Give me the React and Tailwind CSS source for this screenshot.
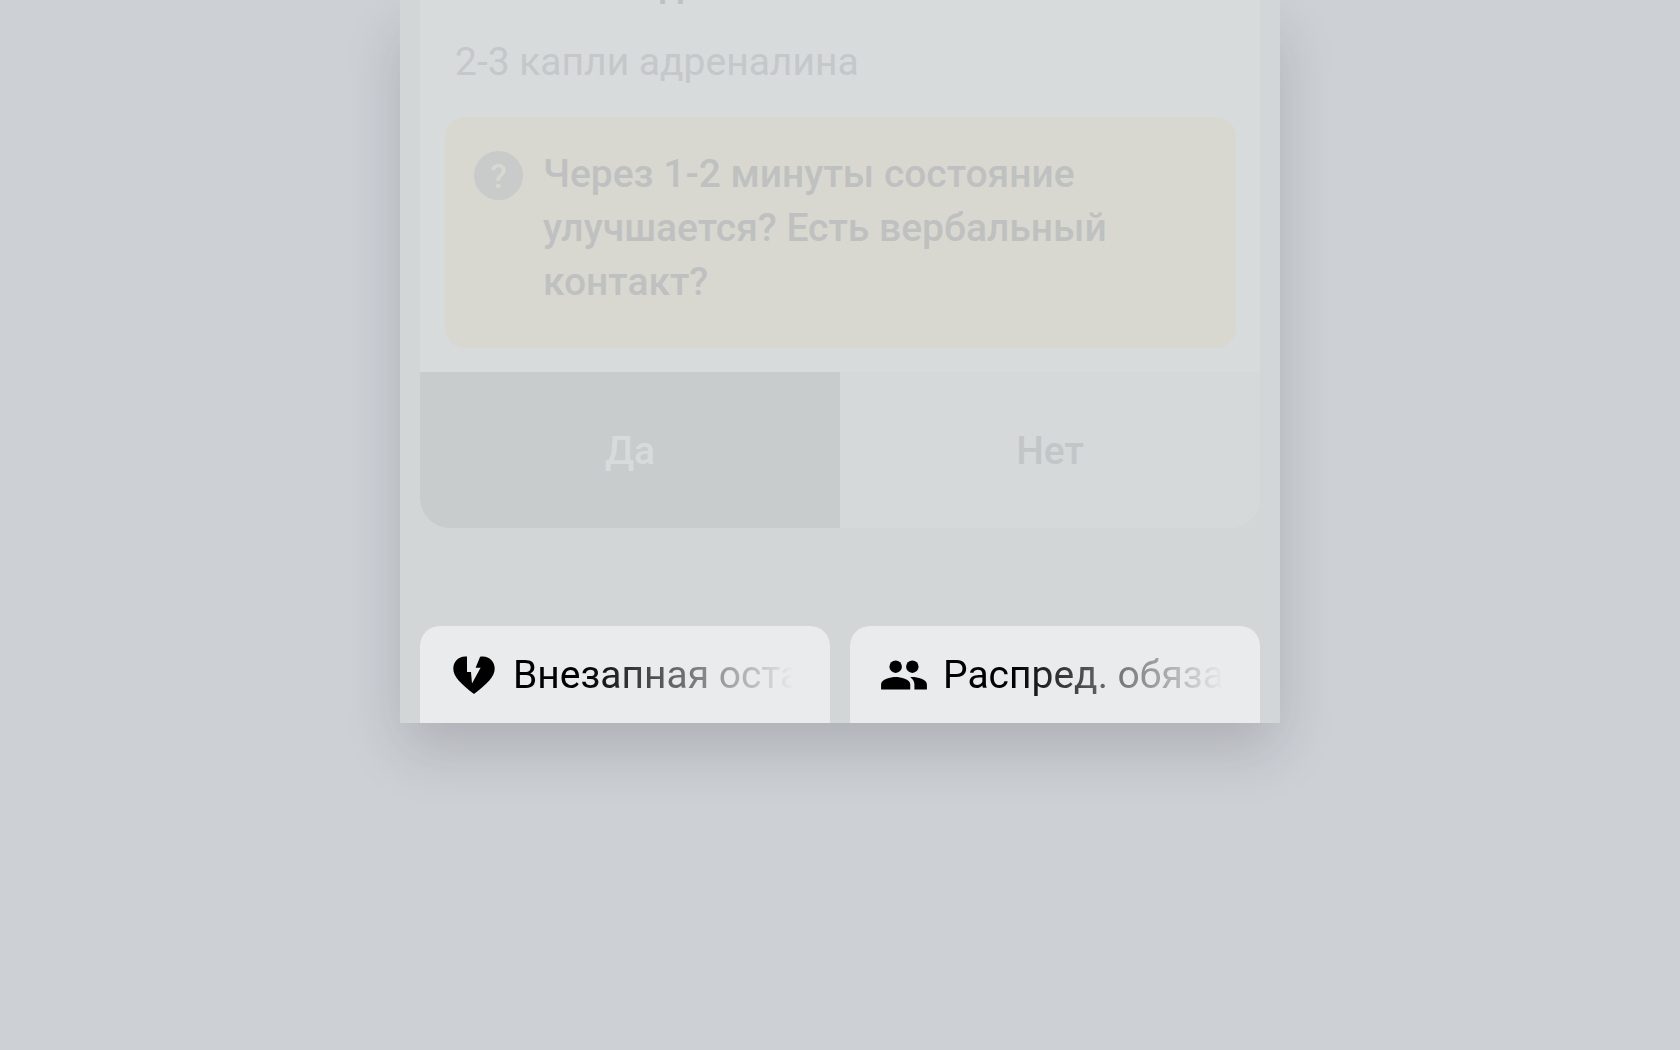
import React from "react";

function BrokenHeart() {
  return (
    <svg viewBox="0 0 54 48" className="h-12 w-[54px] shrink-0" fill="currentColor" aria-hidden="true">
      <path d="M19 5.500h-2C10.500 5.500 5.300 10.500 5.300 17.500c0 8.500 8 15.500 20.700 25.500C38.700 33 46.700 26 46.700 17.500c0-7-5.200-12-11.700-12-1 0-1.900.1-2.900.3L27.600 16.800h5L24 32.500l-1-11.500h-4z" />
    </svg>
  );
}

function People() {
  return (
    <svg viewBox="0 0 24 24" className="mr-[3px] ml-px size-[50px] shrink-0" fill="currentColor" aria-hidden="true">
      <circle cx="8" cy="8" r="3" />
      <circle cx="16" cy="8" r="3" />
      <path d="M8 13c-2.33 0-7 1.17-7 3.5V19h14v-2.500c0-2.330-4.670-3.500-7-3.500z" />
      <path d="M16 13c-.29 0-.62.02-.97.05 1.160.84 1.970 1.970 1.970 3.450V19h6v-2.500c0-2.330-4.670-3.500-7-3.500z" />
    </svg>
  );
}

function Tab({ icon, children }) {
  return (
    <button
      type="button"
      className="flex h-[97px] min-w-0 flex-1 items-center rounded-t-[20px] bg-[#e9ebec] pr-9 pl-7 text-left text-black"
    >
      {icon}
      <span className="ml-[11px] flex-1 overflow-hidden whitespace-nowrap text-[39px] leading-[54px] [mask-image:linear-gradient(to_right,black_25%,transparent)]">
        {children}
      </span>
    </button>
  );
}

export default function App() {
  return (
    <div className="min-h-screen overflow-hidden bg-[#cdd0d5] font-[Roboto,sans-serif]">
      <main className="mx-auto flex max-w-[880px] flex-col bg-[#d2d6d6] px-5 shadow-[0_28px_56px_-4px_rgba(20,30,35,0.18)]">
        <section className="overflow-hidden rounded-b-[30px] bg-[#d7dbdc]">
          <div className="pr-6 pb-6 pl-[25px]">
            <div className="flex h-[35px] items-end overflow-hidden px-[10px]">
              <h2 className="mb-[23px] text-[39px] leading-[54px] font-medium text-[#bfc1c1]">Капните под язык</h2>
            </div>
            <p className="px-[10px] text-[39px] leading-[54px] text-[#c4c8c9]">2-3 капли адреналина</p>
            <div className="mt-7 flex gap-5 rounded-[20px] bg-[#d8d8d0] px-[29px] pt-[30px] pb-[39px]">
              <span className="mt-1 flex size-[49px] shrink-0 items-center justify-center rounded-full bg-[#c8cbc9] text-[34px] leading-none font-medium text-[#d8d8d0]">
                ?
              </span>
              <p className="max-w-[600px] text-[39px] leading-[54px] font-medium text-[#bfc1c1]">
                Через 1-2 минуты состояние улучшается? Есть вербальный контакт?
              </p>
            </div>
          </div>
          <div className="flex h-[156px] text-[39px] font-medium">
            <button type="button" className="flex-1 bg-[#c8cccd] pt-0.5 text-[#d7dbdc]">Да</button>
            <button type="button" className="flex-1 bg-[#d5d9da] pt-0.5 text-[#c2c6c7]">Нет</button>
          </div>
        </section>
        <nav className="mt-[98px] flex gap-5">
          <Tab icon={<BrokenHeart />}>Внезапная остановка</Tab>
          <Tab icon={<People />}>Распред. обязанностей</Tab>
        </nav>
      </main>
    </div>
  );
}
